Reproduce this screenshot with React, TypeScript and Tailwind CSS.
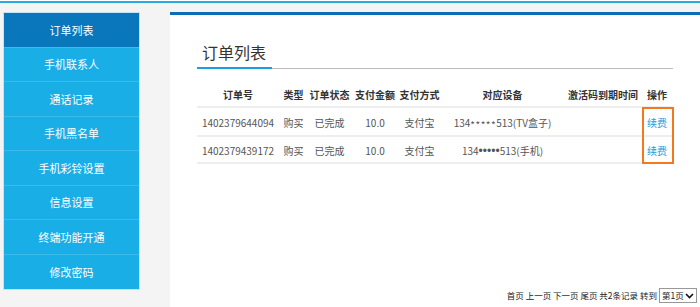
import type { ReactNode } from "react";

const menu = ["订单列表", "手机联系人", "通话记录", "手机黑名单", "手机彩铃设置", "信息设置", "终端功能开通", "修改密码"];

const cols = [
  { label: "订单号", w: "w-[82px]" },
  { label: "类型", w: "w-[29px]" },
  { label: "订单状态", w: "w-[43px]" },
  { label: "支付金额", w: "w-[48px]" },
  { label: "支付方式", w: "w-[41px]" },
  { label: "对应设备", w: "w-[125px]" },
  { label: "激活码到期时间", w: "w-[76px]" },
  { label: "操作", w: "w-[32px]" },
];

const orders: ReactNode[][] = [
  [
    "1402379644094",
    "购买",
    "已完成",
    "10.0",
    "支付宝",
    <>
      134<span className="relative top-[2px] tracking-[0.5px]">*****</span>513(TV盒子)
    </>,
    "",
  ],
  [
    "1402379439172",
    "购买",
    "已完成",
    "10.0",
    "支付宝",
    <>
      134<span className="text-[12px] leading-none" style={{ fontFamily: '"Liberation Sans", sans-serif' }}>•••••</span>513(手机)
    </>,
    "",
  ],
];

const font = { fontFamily: '"Noto Sans CJK SC", "Liberation Sans", sans-serif' };

function Sidebar() {
  return (
    <div className="w-[170px] shrink-0 pl-[3px] pt-[9px]">
      <div className="w-[137px] border border-[#bfe6f7]">
        {menu.map((item, i) => (
          <div
            key={item}
            className={`flex h-[34.5px] items-center justify-center border-b border-[#3cbcec] text-[11px] text-white last:border-b-0 ${
              i === 0 ? "bg-[#0a76bb]" : "bg-[#19aee6]"
            }`}
          >
            {item}
          </div>
        ))}
      </div>
    </div>
  );
}

function OrderTable() {
  return (
    <div className="relative mt-[14px] w-[476px]">
      <div className="flex h-[25px] items-center border-b-2 border-[#eeeeee] text-[10px] font-bold text-[#333]">
        {cols.map((c) => (
          <div key={c.label} className={`${c.w} shrink-0 whitespace-nowrap text-center`}>
            <span className="inline-block -mx-2">{c.label}</span>
          </div>
        ))}
      </div>
      {orders.map((row, r) => (
        <div
          key={r}
          className={`flex items-center border-b-2 border-[#eeeeee] pt-[2px] text-[10px] text-[#555] ${
            r === 0 ? "h-[29px]" : "h-[27px]"
          }`}
        >
          {row.map((cell, i) => (
            <div key={i} className={`${cols[i].w} shrink-0 whitespace-nowrap text-center`}>
              <span className="inline-block -mx-3">{cell}</span>
            </div>
          ))}
          <div className={`${cols[7].w} shrink-0 text-center text-[#1b9de0]`}>续费</div>
        </div>
      ))}
      <div className="pointer-events-none absolute left-[445px] top-[24px] h-[57px] w-[32px] border-2 border-[#f5781f]" />
    </div>
  );
}

export default function App() {
  return (
    <div className="flex h-[307px] w-[700px] flex-col bg-white" style={font}>
      <div className="h-[1px] bg-white" />
      <div className="h-[2px] bg-[#2ba9e2]" />
      <div className="flex flex-1 bg-[#f4f4f4]">
        <Sidebar />
        <div className="mt-[9px] flex flex-1 flex-col border-t-[3px] border-[#0b6db6] bg-white">
          <div className="pl-[27px] pt-[26px]">
            <div className="pl-[5px] text-[16px] leading-[22px] text-[#333]">订单列表</div>
            <div className="mt-[4px] flex h-[2px] w-[476px]">
              <div className="h-[2px] w-[75px] bg-[#1a9fe0]" />
              <div className="h-[1px] flex-1 self-end bg-[#bbbbbb]" />
            </div>
            <OrderTable />
          </div>
          <div className="mt-auto flex items-center justify-end gap-[2px] pb-[4px] pr-[3px] text-[8.5px] text-[#222]">
            <span className="whitespace-pre">首页 上一页 下一页 尾页 共2条记录 转到</span>
            <div className="flex h-[15px] w-[38px] items-center justify-between border border-[#999] pl-[2px] pr-[2px]">
              <span>第1页</span>
              <svg width="9" height="6" viewBox="0 0 9 6">
                <path d="M1 1 L4.5 4.5 L8 1" stroke="#111" strokeWidth="1.6" fill="none" />
              </svg>
            </div>
          </div>
        </div>
      </div>
    </div>
  );
}
